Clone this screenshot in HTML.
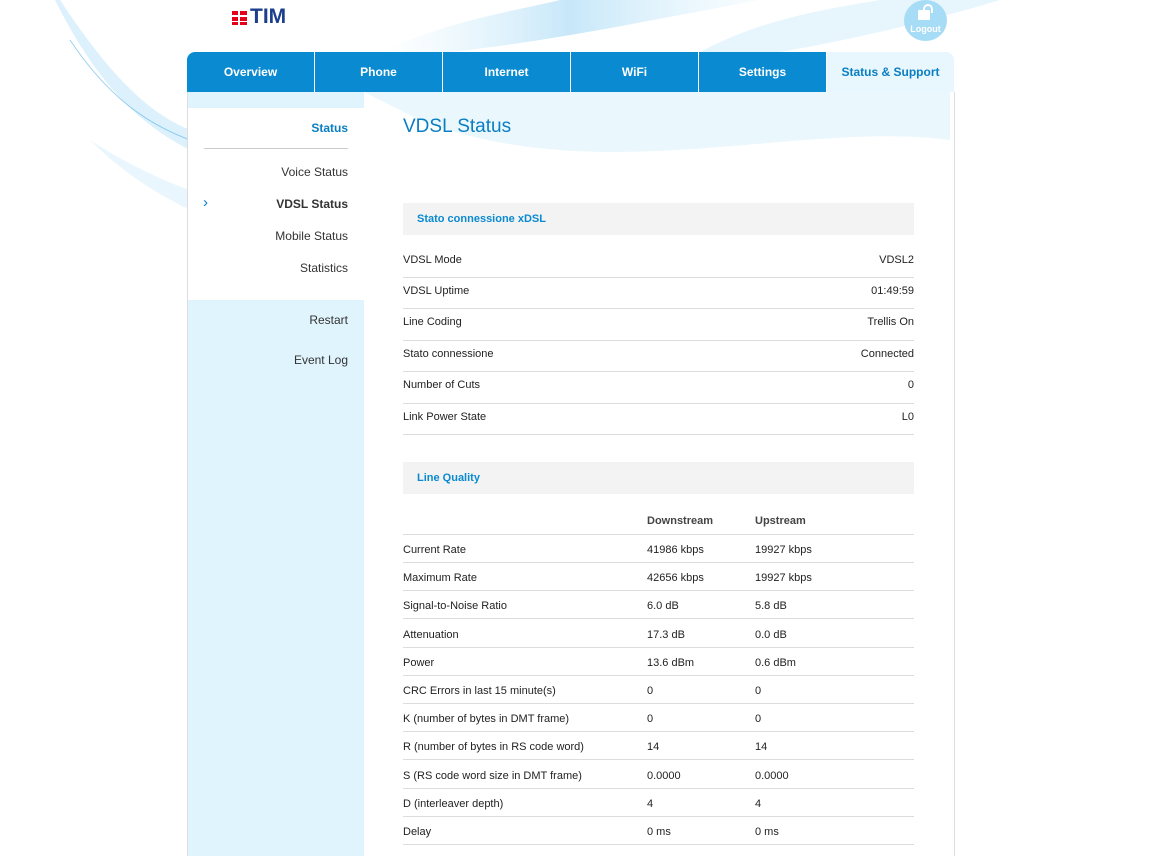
<!DOCTYPE html>
<html><head><meta charset="utf-8"><style>
*{margin:0;padding:0;box-sizing:border-box}
body{width:1176px;height:856px;overflow:hidden;background:#fff;font-family:"Liberation Sans",Arial,sans-serif;position:relative}
.abs{position:absolute}
.tab{position:absolute;top:52px;height:40px;width:127px;background:#0a8ad0;color:#fff;font-weight:bold;font-size:12px;text-align:center;line-height:40px}
.side{left:187px;top:92px;width:177px;height:764px;background:#e0f4fd}
.si{position:absolute;right:16px;font-size:12px;color:#333;text-align:right}
.sec{position:absolute;left:403px;width:511px;height:32px;background:#f3f3f3;color:#0a8ad0;font-weight:bold;font-size:11px;padding-left:14px;line-height:32px}
.r{position:absolute;left:403px;width:511px;border-bottom:1px solid #ddd;font-size:11px;color:#222}
.r span{position:absolute}
.bar{position:absolute;height:4px;background:#e2001a}
</style></head><body>
<svg class="abs" style="left:0;top:0" width="1176" height="300">
<defs><linearGradient id="g" x1="0" y1="0" x2="1" y2="0"><stop offset="0" stop-color="#bfe6fa" stop-opacity="0"/><stop offset="0.5" stop-color="#8fd0f3"/><stop offset="1" stop-color="#bfe6fa" stop-opacity="0.2"/></linearGradient></defs>
<path d="M60 0 C100 60 140 110 190 130 L190 150 C130 120 90 70 55 0Z" fill="#9bd6f5" opacity="0.35"/>
<path d="M70 40 C110 100 150 125 190 140" stroke="#3aa6e2" stroke-width="1" fill="none" opacity="0.5"/>
<path d="M90 140 C130 180 170 200 190 210 L190 190 C160 180 120 160 90 140Z" fill="#bfe6fa" opacity="0.35"/>
<path d="M380 52 C450 20 520 10 560 0 L760 0 C650 20 560 40 450 52Z" fill="url(#g)" opacity="0.5"/>
<path d="M700 52 C760 20 820 10 880 0 L1000 0 C900 30 820 45 780 52Z" fill="#b9e2f8" opacity="0.35"/>
<path d="M364 92 L950 92 L950 140 C800 120 600 190 420 120Z" fill="#cbeafa" opacity="0.4"/>
</svg>
<div class="bar" style="left:232px;top:11px;width:6px"></div><div class="bar" style="left:240px;top:11px;width:7px"></div>
<div class="bar" style="left:232px;top:17px;width:6px"></div><div class="bar" style="left:240px;top:17px;width:7px"></div>
<div class="bar" style="left:232px;top:22px;width:6px;height:3px"></div><div class="bar" style="left:240px;top:22px;width:7px;height:3px"></div>
<div class="abs" style="left:250px;top:5px;font-size:21px;font-weight:bold;color:#1c3e8c">TIM</div>
<div class="abs" style="left:904px;top:0;width:43px;height:41px;border-radius:50%;background:#a7dcf6"></div>
<div class="abs" style="left:918px;top:10px;width:12px;height:10px;background:#fff;border-radius:1px"></div>
<div class="abs" style="left:923px;top:4px;width:10px;height:9px;border:2px solid #fff;border-bottom:none;border-radius:5px 5px 0 0"></div>
<div class="abs" style="left:904px;top:24px;width:43px;text-align:center;color:#fff;font-size:9px;font-weight:bold">Logout</div>
<div class="tab" style="left:187px;border-radius:8px 0 0 0">Overview</div>
<div class="tab" style="left:315px">Phone</div>
<div class="tab" style="left:443px">Internet</div>
<div class="tab" style="left:571px">WiFi</div>
<div class="tab" style="left:699px">Settings</div>
<div class="tab" style="left:827px;background:#e8f6fd;color:#0a7ec2;border-radius:0 8px 0 0">Status &amp; Support</div>
<div class="abs" style="left:954px;top:92px;width:1px;height:764px;background:#ddd"></div>
<div class="abs side"></div>
<div class="abs" style="left:187px;top:92px;width:1px;height:764px;background:#ddd"></div>
<div class="abs" style="left:188px;top:108px;width:176px;height:192px;background:#fff"></div>
<div class="si" style="top:121px;left:187px;width:161px;color:#0a7ec2;font-weight:bold">Status</div>
<div class="abs" style="left:204px;top:148px;width:144px;height:1px;background:#ccc"></div>
<div class="si" style="top:165px;left:187px;width:161px">Voice Status</div>
<div class="si" style="top:197px;left:187px;width:161px;font-weight:bold">VDSL Status</div>
<div class="abs" style="left:203px;top:194px;color:#0a7ec2;font-size:15px">&#x203A;</div>
<div class="si" style="top:229px;left:187px;width:161px">Mobile Status</div>
<div class="si" style="top:261px;left:187px;width:161px">Statistics</div>
<div class="si" style="top:313px;left:187px;width:161px">Restart</div>
<div class="si" style="top:353px;left:187px;width:161px">Event Log</div>
<div class="abs" style="left:403px;top:116px;font-size:19px;color:#0a7ec2">VDSL Status</div>
<div class="sec" style="top:203px">Stato connessione xDSL</div>
<div class="r" style="top:247px;height:31px"><span style="left:0;top:7px">VDSL Mode</span><span style="right:0;top:7px">VDSL2</span></div>
<div class="r" style="top:278px;height:31px"><span style="left:0;top:7px">VDSL Uptime</span><span style="right:0;top:7px">01:49:59</span></div>
<div class="r" style="top:309px;height:32px"><span style="left:0;top:7px">Line Coding</span><span style="right:0;top:7px">Trellis On</span></div>
<div class="r" style="top:341px;height:31px"><span style="left:0;top:7px">Stato connessione</span><span style="right:0;top:7px">Connected</span></div>
<div class="r" style="top:372px;height:32px"><span style="left:0;top:7px">Number of Cuts</span><span style="right:0;top:7px">0</span></div>
<div class="r" style="top:404px;height:31px"><span style="left:0;top:7px">Link Power State</span><span style="right:0;top:7px">L0</span></div>
<div class="sec" style="top:462px">Line Quality</div>
<div class="r" style="top:515px;height:20px;font-weight:bold;color:#444"><span style="left:244px">Downstream</span><span style="left:352px">Upstream</span></div>
<div id="lq"></div>
<script>
var d=[["Current Rate","41986 kbps","19927 kbps"],["Maximum Rate","42656 kbps","19927 kbps"],["Signal-to-Noise Ratio","6.0 dB","5.8 dB"],["Attenuation","17.3 dB","0.0 dB"],["Power","13.6 dBm","0.6 dBm"],["CRC Errors in last 15 minute(s)","0","0"],["K (number of bytes in DMT frame)","0","0"],["R (number of bytes in RS code word)","14","14"],["S (RS code word size in DMT frame)","0.0000","0.0000"],["D (interleaver depth)","4","4"],["Delay","0 ms","0 ms"]];
var h="";for(var i=0;i<d.length;i++){var t=535+i*28.2;h+='<div class="r" style="top:'+t+'px;height:28px"><span style="left:0;top:9px">'+d[i][0]+'</span><span style="left:244px;top:9px">'+d[i][1]+'</span><span style="left:352px;top:9px">'+d[i][2]+'</span></div>';}
document.getElementById("lq").innerHTML=h;
</script>
</body></html>
